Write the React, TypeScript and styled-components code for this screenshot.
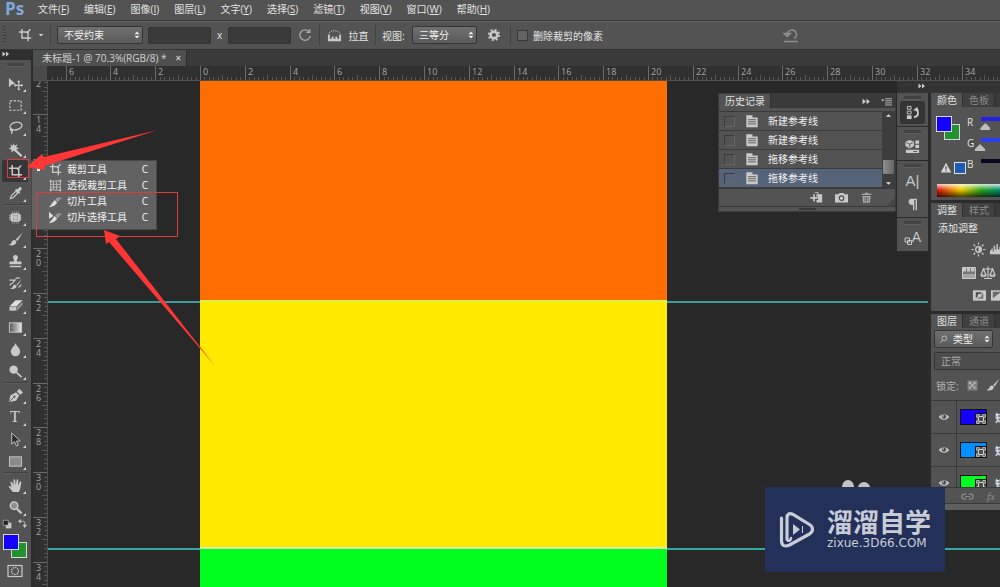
import React, { useEffect, useState } from 'react';
import styled, { createGlobalStyle } from 'styled-components';

const GlobalStyle = createGlobalStyle`
  * { box-sizing: border-box; }
  html, body { margin: 0; padding: 0; background: #282828; }
  body, button, input, select {
    font-family: "Open Sans", "Noto Sans CJK SC", sans-serif;
    font-size: 10px;
    color: #e4e4e4;
  }
  button { border: 0; padding: 0; background: none; cursor: pointer; }
  ul { list-style: none; margin: 0; padding: 0; }
  svg { display: block; flex: none; }
`;

/* ---------- icons ---------- */

const C = '#c9c9c9';

const ICONS: Record<string, React.ReactNode> = {
  move: (
    <>
      <path d="M1 2v10l3-3 4-.5z" fill={C} />
      <path d="M11.500 5.500v9M7 10h9" stroke={C} strokeWidth="1.200" fill="none" />
      <path d="M11.500 4.500l1.800 2h-3.600zM11.500 15.500l1.800-2h-3.600zM6.300 10l2-1.800v3.600zM16 10l-2-1.800v3.600z" fill={C} />
    </>
  ),
  marquee: <rect x="2" y="3" width="12" height="10" fill="none" stroke={C} strokeWidth="1.200" strokeDasharray="2.500 1.500" />,
  lasso: (
    <g fill="none" stroke={C} strokeWidth="1.400">
      <ellipse cx="8.500" cy="6.500" rx="6.500" ry="4" transform="rotate(-12 8.500 6.500)" />
      <path d="M4 9c-2 0-2 2.500 0 2.200 1 0 1 2-.8 3.300" />
    </g>
  ),
  wand: (
    <>
      <path d="M7 8l7.500 7" stroke={C} strokeWidth="2.400" />
      <path d="M6 1l1 3 3-1.500L8.800 5.500 12 7 8.500 8l.5 3-3-2-2.500 2.500.3-3.500L.5 7l3-1.300L2.500 2.500 5 4z" fill={C} />
    </>
  ),
  crop: <path d="M4.500 1v10.500H15M1 4.500h10.500V15M10 6l4-4.500" fill="none" stroke={C} strokeWidth="1.600" />,
  perspective: (
    <>
      <path d="M2 3l12-1v12L2 13zM5.500 2.700v10.600M9.500 2.400v11.300M2 6.500h12M2 10h12" fill="none" stroke={C} strokeWidth="1" />
      <path d="M1 1h2v3H1zM13 1h2v3h-2zM1 12h2v3H1zM13 12h2v3h-2z" fill={C} />
    </>
  ),
  slice: (
    <>
      <path d="M0 15l7-9 3 3.500c-2 3.500-6 5-10 5.500z" fill="#dedede" />
      <path d="M7.500 6L10 3h6.500l-6 6z" fill="#959595" />
    </>
  ),
  sliceSelect: (
    <>
      <path d="M0 1v8.500l5.500-3.500zM0 15l7-9 3 3.500c-2 3.500-6 5-10 5.500z" fill="#dedede" />
      <path d="M7.500 6L10 3h6.500l-6 6z" fill="#959595" />
    </>
  ),
  eyedropper: (
    <>
      <path d="M2.500 13.500l1-3 5-5 2 2-5 5z" fill="none" stroke={C} strokeWidth="1.300" />
      <path d="M7.500 4l1.500-1 1 .8L12 1.500c1.500-1.200 3.500.8 2.300 2.300L12.200 6l.8 1-1 1.500z" fill={C} />
    </>
  ),
  heal: (
    <>
      <rect x="2.500" y="3.500" width="11" height="9" rx="3" fill={C} />
      <path d="M5 1.500v13M7 1.500v13M9 1.500v13M11 1.500v13M1 6h14M1 8h14M1 10h14" stroke={C} strokeWidth=".8" strokeDasharray="1.200 .8" />
      <path d="M5 6h6M5 10h6M6 4v8M10 4v8" stroke="#8b8b8b" strokeWidth=".5" />
    </>
  ),
  brush: <path d="M15.500 .5L8.300 8l1.700 1.800zM7.800 8.700c-2-.8-3.500.8-4 2.300-.5 1.500-1.500 2.300-3.300 2.600 3.300 1.400 8 .8 8.500-3.300z" fill={C} />,
  stamp: <path d="M8 1a2.600 2.600 0 0 0-2.200 4c.6 1 .8 1.500.8 3H3c-1 0-1.500.7-1.500 1.500V11h13V9.500c0-.8-.5-1.500-1.500-1.500H9.400c0-1.500.2-2 .8-3A2.600 2.600 0 0 0 8 1zM2 12.500h12V14H2z" fill={C} />,
  historyBrush: (
    <>
      <path d="M15 3L9 9l1 1.200zM8.300 9.500c-1.800-.6-2.800.6-3.300 2-.4 1-1.300 1.600-2.600 1.800 2.600 1.200 6.500.6 6.900-2.800z" fill={C} />
      <path d="M1.500 4.500h6L4.500 8c-2 0-2 1-2 2M8 3c2-1.300 3.500-1 4.500-.5M11 12c1.500-.5 2.500-1.500 3-3" fill="none" stroke={C} strokeWidth="1.300" />
    </>
  ),
  eraser: (
    <>
      <path d="M8 2.500h7.500L9 9H1.500z" fill="#dedede" />
      <path d="M1.500 9.700H9V13.500H1.500z" fill={C} />
      <path d="M9.700 9.300L15.500 4v3.500L9.700 13.500z" fill="#8f8f8f" />
    </>
  ),
  gradient: (
    <>
      <defs>
        <linearGradient id="toolGradient">
          <stop offset="0" stopColor="#555" />
          <stop offset="1" stopColor="#e8e8e8" />
        </linearGradient>
      </defs>
      <rect x="1.500" y="3" width="13" height="10" fill="url(#toolGradient)" stroke={C} />
    </>
  ),
  drop: <path d="M8 1c.6 3 5 5.500 5 9.200a5 5 0 0 1-10 0C3 6.500 7.400 4 8 1z" fill={C} />,
  dodge: (
    <>
      <circle cx="6" cy="6" r="4.500" fill={C} />
      <path d="M9 9l5.500 5" stroke={C} strokeWidth="1.800" />
    </>
  ),
  pen: (
    <>
      <path d="M1 15L2.500 8 8.500 4.500l3.500 3.500L8.500 13.500z" fill={C} />
      <path d="M9.500 3.700l2.500-3 4 4-3 2.500z" fill={C} />
      <path d="M1.500 14.500l4.500-4.500" stroke="#535353" />
      <circle cx="6.800" cy="9.200" r="1.200" fill="#535353" />
    </>
  ),
  pathSelect: <path d="M4 1v12l3-2.800L9 15l2-1-2-4.300 4-.2z" fill="#2c2c2c" stroke={C} strokeWidth="1" />,
  rect: <rect x="1.500" y="3" width="13" height="10" fill="#8b8b8b" stroke={C} />,
  hand: <path d="M5 15c-1-2-3-4-4.300-6 .8-1 2-.5 3.300 1L2.500 4.500c.8-1 1.800-.5 2 .3L6 8 5.700 2c.6-1 1.700-.9 1.900 0L8.300 7.500 9.300 2c.6-.9 1.700-.6 1.700.3L10.700 8l2-4c.8-.8 1.800-.2 1.500.8C13.500 8 13.500 12 11.500 15z" fill={C} />,
  zoom: (
    <>
      <circle cx="6.500" cy="6" r="4" fill="#8d8d8d" stroke={C} strokeWidth="1.600" />
      <path d="M9.500 9.300l5 5" stroke={C} strokeWidth="2.400" />
    </>
  ),
  mask: (
    <>
      <rect x="1" y="2.500" width="14" height="11" fill="none" stroke={C} strokeWidth="1.200" />
      <circle cx="8" cy="8" r="3.500" fill="none" stroke={C} strokeWidth="1.200" strokeDasharray="1.500 .8" />
    </>
  ),
  rotate: <path d="M12.500 4A6 6 0 1 0 14 9M13.500 1v4H9.500" fill="none" stroke="#a9a9a9" strokeWidth="1.500" />,
  straighten: (
    <>
      <path d="M1 7h2v7H1zM13 7h2v7h-2zM2 11.500h12V14H2zM5 9h2v3H5zM9 9h2v3H9z" fill={C} />
      <path d="M2 5.500c3-3.500 9-3.500 12 0" fill="none" stroke={C} strokeDasharray="1.500 1" />
    </>
  ),
  gear: (
    <>
      <circle cx="8" cy="8" r="3.800" fill="none" stroke={C} strokeWidth="2.800" />
      <circle cx="8" cy="8" r="6" fill="none" stroke={C} strokeWidth="2" strokeDasharray="2.350 2.350" />
    </>
  ),
  reset: <path d="M4.500 8a4.500 4.500 0 1 1 6.500 3.500M1 6.500l3.300 3 3-3zM1 14.500h14" fill="none" stroke="#8f8f8f" strokeWidth="1.500" />,
  doc: (
    <>
      <path d="M1.500 1.500h7V4h6v11h-13z" fill={C} />
      <path d="M3.500 6.500h9M3.500 8.900h9M3.500 11.300h9" stroke="#555" strokeWidth="1" />
    </>
  ),
  newDoc: (
    <>
      <path d="M8 4h7v10H8V11h2V7H8z" fill={C} />
      <path d="M5 4v9M.5 8.500h9" stroke={C} strokeWidth="2" />
      <path d="M6 2h4v3M12 6v2h-1" fill="none" stroke={C} />
    </>
  ),
  camera: (
    <>
      <path d="M0 4h4.500l1-1.500h5l1 1.500H16v10H0z" fill={C} />
      <circle cx="8" cy="8.800" r="2.800" fill={C} stroke="#505050" strokeWidth="1.400" />
    </>
  ),
  trash: (
    <>
      <path d="M2 3.500h12V5H2zM6 2h4v1.500H6zM3 6h10l-.7 8.500H3.700z" fill="#a8a8a8" />
      <path d="M6 7.500v5.500M8 7.500v5.500M10 7.500v5.500" stroke="#5b5b5b" />
    </>
  ),
  history: (
    <>
      <path d="M2.500 1.500h4v3h-4zM2.500 6.500h4v3h-4z" fill="none" stroke={C} />
      <path d="M2 11h5v4H2z" fill={C} />
      <path d="M9.500 13c5-1 5-4 3.500-7" fill="none" stroke={C} strokeWidth="2" />
      <path d="M8.500 5.500L13 2l2 5z" fill={C} />
    </>
  ),
  props: (
    <>
      <path d="M5 1l4.500 2v4.500L5 10 .5 7.500V3z" fill={C} />
      <path d="M1.500 3.800L5 5.500l3.500-1.700M5 5.500v3.500" stroke="#555" fill="none" />
      <path d="M11 1.500h4V5h-4zM11 6h4v3.500h-4zM1 11.500h14V15H1z" fill={C} />
      <path d="M9 13.300h4" stroke="#555" />
    </>
  ),
  paragraph: <path d="M12.500 2H6.500a3.500 3.500 0 0 0 0 7H8v6h1.500V3.500h1.500V15h1.500z" fill={C} />,
  charStyle: (
    <>
      <path d="M2 2h9v8H2z" fill="none" stroke={C} strokeWidth="2" />
      <path d="M7 7h8v8H7z" fill="none" stroke={C} strokeWidth="2" />
    </>
  ),
  sun: (
    <>
      <circle cx="8" cy="8" r="3" fill="none" stroke={C} strokeWidth="1.400" />
      <path d="M8 5a3 3 0 0 1 0 6z" fill={C} />
      <path d="M8 .5v2.500M8 13v2.500M.5 8H3M13 8h2.500M2.700 2.700l1.800 1.800M11.500 11.500l1.800 1.800M2.700 13.300l1.800-1.800M11.500 4.500l1.800-1.800" stroke={C} strokeWidth="1.300" />
    </>
  ),
  levels: <path d="M1 13V9h1.500V7H4v3h1V4h1.500v4H8V2h1.500v6H11V5h1.500v4H14v4z" fill={C} />,
  hue: (
    <>
      <path d="M1.500 2.500h13v11h-13z" fill="#777" stroke={C} />
      <path d="M2 3h3v3.500H2zM6 3h3v3.500H6zM10 3h3.500v3.500H10z" fill={C} />
      <path d="M2 9h12v4H2z" fill="#a5a5a5" />
    </>
  ),
  balance: <path d="M8 1.500v12M4 13.500h8M2.500 4h11M3.500 4L1 10h5zM12.500 4L10 10h5zM1 10c.5 2 4.500 2 5 0zM10 10c.5 2 4.500 2 5 0z" fill="none" stroke={C} strokeWidth="1.200" />,
  invert: (
    <>
      <rect x="1" y="2.500" width="14" height="11" fill={C} />
      <path d="M4 4.500h7L4 11z" fill="#4b4b4b" />
      <path d="M12 5v6.500H5.500z" fill="#777" />
      <circle cx="8" cy="8" r="2" fill={C} />
    </>
  ),
  poster: (
    <>
      <rect x="1" y="2.500" width="14" height="11" fill={C} />
      <path d="M3 4h9L3 11z" fill="#6b6b6b" />
    </>
  ),
  checker: (
    <>
      <rect x="1.500" y="1.500" width="13" height="13" fill="#777" stroke="#999" />
      <path d="M3 3h3v3H3zM9.500 3h3v3h-3zM6 6h3.500v3.500H6zM3 9.500h3v3H3zM9.500 9.500h3v3h-3z" fill="#bbb" />
    </>
  ),
  eye: (
    <>
      <path d="M1 8c3.500-5 10.500-5 14 0-3.500 5-10.500 5-14 0z" fill="#c0c0c0" />
      <circle cx="8" cy="7.500" r="2.800" fill="#4d4d4d" />
      <circle cx="7.200" cy="6.800" r="1" fill="#ccc" />
    </>
  ),
  link: <path d="M6.500 11H4a3 3 0 0 1 0-6h2.500M9.500 5H12a3 3 0 0 1 0 6H9.500M5 8h6" fill="none" stroke="#909090" strokeWidth="1.400" />,
  search: (
    <>
      <circle cx="9.500" cy="6" r="4.200" fill="none" stroke={C} strokeWidth="1.500" />
      <path d="M6.500 9l-4.500 5" stroke={C} strokeWidth="1.500" />
    </>
  ),
  warn: (
    <>
      <path d="M8 1l7 13H1z" fill="#d6d6d6" />
      <path d="M8 5.500v4.500M8 11.200v1.500" stroke="#444" strokeWidth="1.500" />
    </>
  ),
  updown: <path d="M3 6.500L8 1l5 5.500zM3 9.500L8 15l5-5.500z" fill="#e8e8e8" />,
  double: <path d="M1 3l6 5-6 5zM8 3l6 5-6 5z" fill="#cfcfcf" />,
  menu: (
    <>
      <path d="M0 5h5L2.500 8z" fill={C} />
      <path d="M6 4h10M6 7h10M6 10h10M6 13h10" stroke={C} strokeWidth="1.200" />
    </>
  ),
  caret: <path d="M2 5h12l-6 6z" fill="#e0e0e0" />,
  up: <path d="M2 11h12L8 5z" fill="#e0e0e0" />,
  defaults: (
    <>
      <path d="M6 6h9v9H6z" fill={C} />
      <path d="M2 2h8v8H2z" fill="#222" stroke={C} />
    </>
  ),
  swap: (
    <>
      <path d="M4 4h4c3 0 4 1 4 4v3" fill="none" stroke={C} strokeWidth="1.600" />
      <path d="M5 0v8L0 4zM8 10h8l-4 6z" fill={C} />
    </>
  ),
  vector: (
    <>
      <path d="M4 4h8v8H4z" fill="none" stroke="#ddd" strokeWidth="1.500" />
      <path d="M1 1h4v4H1zM11 1h4v4h-4zM1 11h4v4H1zM11 11h4v4h-4z" fill="#4a4a4a" stroke="#ddd" strokeWidth="1.300" />
    </>
  ),
};

const Icon = ({ name, size = 16 }: { name: string; size?: number }) => (
  <svg width={size} height={size} viewBox="0 0 16 16" aria-hidden="true">
    {ICONS[name]}
  </svg>
);

/* ---------- frame ---------- */

const Page = styled.div`
  display: flex;
  flex-direction: column;
  min-height: 100vh;
  overflow: hidden;
  position: relative;
`;

const MenuBar = styled.nav`
  display: flex;
  align-items: flex-start;
  gap: 15px;
  height: 20px;
  padding-left: 5px;
  background: #535353;
`;

const Brand = styled.span`
  width: 18px;
  font: bold 17px/17px "Open Sans", sans-serif;
  color: #7fa9da;
`;

const MenuItem = styled.button`
  height: 17px;
  text-align: left;
  white-space: nowrap;
  line-height: 16px;
`;

const OptionsBar = styled.div`
  display: flex;
  align-items: center;
  height: 30px;
  padding-left: 3px;
  background: #535353;
  border-top: 1px solid #333;
  border-bottom: 1px solid #333;
  box-shadow: inset 0 1px #626262;
  white-space: nowrap;
`;

const Grip = styled.span`
  width: 3px;
  height: 18px;
  margin-right: 12px;
  background: repeating-linear-gradient(#3e3e3e 0 1px, #535353 1px 3px);
`;

const Divider = styled.span`
  width: 1px;
  height: 20px;
  margin-right: 6px;
  background: #424242;
`;

const ToolIcon = styled.button<{ $w: number }>`
  display: flex;
  align-items: center;
  justify-content: center;
  flex: none;
  width: ${(p) => p.$w}px;
  height: 18px;
`;

const SelectBox = styled.span<{ $w: string; $flat?: boolean; $pad?: number }>`
  display: flex;
  align-items: center;
  position: relative;
  flex: none;
  width: ${(p) => p.$w};
  height: 18px;
  border: 1px solid #353535;
  border-radius: 2px;
  background: ${(p) => (p.$flat ? '#4d4d4d' : 'linear-gradient(#707070, #5a5a5a)')};

  select {
    appearance: none;
    flex: 1;
    width: 100%;
    height: 16px;
    padding: 0 0 0 ${(p) => p.$pad ?? 6}px;
    border: 0;
    background: none;
    line-height: 14px;
    color: ${(p) => (p.$flat ? '#a8a8a8' : '#f0f0f0')};
  }
  svg { position: absolute; right: 1px; pointer-events: none; }
  svg:first-child { right: auto; left: 4px; }
`;

const SizeFields = styled.span`
  display: flex;
  align-items: center;
  padding-left: 5px;
`;

const SizeInput = styled.input`
  width: 63px;
  height: 17px;
  border: 1px solid #333;
  border-radius: 2px;
  background: #3a3a3a;
`;

const Times = styled.span`
  width: 17px;
  text-align: center;
`;

const FieldLabel = styled.label`
  width: 30px;
`;

const CheckLabel = styled.label`
  display: flex;
  align-items: center;
  gap: 5px;
`;

const Check = styled.input`
  appearance: none;
  flex: none;
  width: 11px;
  height: 11px;
  margin: 0;
  border: 1px solid #383838;
  background: #626262;
`;

const ResetButton = styled(ToolIcon)`
  margin-left: 180px;
`;

const Body = styled.div`
  display: flex;
  flex: 1;
`;

/* ---------- tool column ---------- */

const ToolColumn = styled.aside`
  display: flex;
  flex-direction: column;
  flex: none;
  width: 33px;
  background: #535353;
  border-right: 2px solid #2b2b2b;
`;

const ColumnHead = styled.div`
  height: 10px;
  padding-left: 2px;
  background: #2f2f2f;
`;

const PanelGrip = styled.div<{ $h: number }>`
  display: flex;
  justify-content: center;
  height: ${(p) => p.$h}px;
  padding-top: 3px;
  &::after {
    content: '';
    width: 17px;
    height: 3px;
    background: #424242;
    border-bottom: 1px solid #5f5f5f;
  }
`;

const Tool = styled.button<{ $active?: boolean }>`
  display: flex;
  align-items: center;
  justify-content: center;
  position: relative;
  flex: none;
  width: 26px;
  height: 22px;
  margin-left: 2px;
  background: ${(p) => (p.$active ? '#363636' : 'none')};
  border-radius: 2px;
  &::after {
    content: '';
    position: absolute;
    right: 2px;
    bottom: 2px;
    border-left: 3px solid transparent;
    border-bottom: 3px solid #d6d6d6;
  }
  span { font: 16px/16px "Liberation Serif", serif; color: #d3d3d3; }
`;

const ToolRule = styled.div`
  height: 2px;
  margin: 0 3px;
  background: #414141;
  border-bottom: 1px solid #5b5b5b;
`;

const SwatchTools = styled.div`
  display: flex;
  justify-content: space-between;
  padding: 1px 4px 0 2px;
  height: 14px;
`;

const Swatches = styled.div<{ $left: number }>`
  display: grid;
  grid-template-columns: 8px 8px 8px;
  grid-template-rows: 8px 8px 8px;
  margin: 2px 0 4px ${(p) => p.$left}px;
`;

const Swatch = styled.button<{ $color: string; $back?: boolean }>`
  grid-area: ${(p) => (p.$back ? '2 / 2 / 4 / 4' : '1 / 1 / 3 / 3')};
  z-index: ${(p) => (p.$back ? 0 : 1)};
  border: 1px solid #d8d8d8;
  background: ${(p) => p.$color};
`;

/* ---------- document ---------- */

const Workspace = styled.main`
  display: flex;
  flex-direction: column;
  flex: 1;
  min-width: 0;
`;

const TabStrip = styled.div`
  display: flex;
  height: 16px;
  background: #3a3a3a;
`;

const DocTab = styled.div`
  display: flex;
  align-items: center;
  gap: 9px;
  padding: 0 5px 0 9px;
  background: #4f4f4f;
  border-right: 1px solid #2f2f2f;
  line-height: 15px;
  white-space: nowrap;
  color: #d2d2d2;
  button { line-height: 12px; }
`;

const RulerRow = styled.div`
  display: flex;
  height: 15px;
  overflow: hidden;
  background: #303030;
  border-bottom: 1px solid #505050;
`;

const Corner = styled.span`
  flex: none;
  width: 15px;
  background: #4a4a4a;
  border-right: 1px solid #303030;
`;

const CanvasRow = styled.div`
  display: flex;
  flex: 1;
`;

const SideRuler = styled.div`
  contain: size;
  flex: none;
  width: 15px;
  overflow: hidden;
  background: #303030;
  border-right: 1px solid #505050;
`;

const Canvas = styled.div`
  display: flex;
  position: relative;
  flex: 1;
  min-width: 0;
  padding-left: 152px;
  background: #282828;
`;

const Artboard = styled.div`
  display: flex;
  flex-direction: column;
  position: relative;
  width: 467px;
`;

const Band = styled.div<{ $color: string; $edge?: string; $h?: number }>`
  height: ${(p) => (p.$h ? `${p.$h}px` : 'auto')};
  flex: ${(p) => (p.$h ? 'none' : 1)};
  background: ${(p) => p.$color};
  border-bottom: ${(p) => (p.$edge ? `2px solid ${p.$edge}` : '0')};
`;

const Guide = styled.div<{ $y: number; $color: string }>`
  position: absolute;
  left: 0;
  right: 0;
  top: ${(p) => p.$y}px;
  height: 2px;
  background: ${(p) => p.$color};
`;

const PITCH = 22.4;

const useWindowSize = () => {
  const read = () => ({ width: window.innerWidth, height: window.innerHeight });
  const [size, setSize] = useState(read);
  useEffect(() => {
    const update = () => setSize(read());
    window.addEventListener('resize', update);
    return () => window.removeEventListener('resize', update);
  }, []);
  return size;
};

const range = (from: number, to: number) => Array.from({ length: to - from }, (_, i) => from + i);
const isMajor = (i: number) => i % 10 === 0;
const tickLength = (i: number) => (isMajor(i) ? 14 : i % 5 === 0 ? 5 : 3);
const tickColor = (i: number) => (isMajor(i) ? '#6a6a6a' : '#585858');

const TopRuler = ({ width }: { width: number }) => {
  const at = (i: number) => Math.round(152 + (i * PITCH) / 5);
  const marks = range(-33, 600).filter((i) => at(i) < width);
  return (
    <svg width={width} height="14" aria-label="水平标尺">
      {marks.map((i) => (
        <path key={i} d={`M${at(i) + 0.5} ${14 - tickLength(i)}V14`} stroke={tickColor(i)} />
      ))}
      {marks.filter((i) => isMajor(i) && at(i) < width - 16).map((i) => (
        <text key={i} x={at(i) + 3} y="9" fontSize="9" fill="#a6a6a6">{Math.abs(i / 5)}</text>
      ))}
    </svg>
  );
};

const LeftRuler = ({ height }: { height: number }) => {
  const at = (i: number) => Math.round(212 + ((i - 110) * PITCH) / 5);
  const marks = range(60, 500).filter((i) => at(i) < height);
  return (
    <svg width="14" height={height} aria-label="垂直标尺">
      {marks.map((i) => (
        <path key={i} d={`M${14 - tickLength(i)} ${at(i) + 0.5}H14`} stroke={tickColor(i)} />
      ))}
      {marks.filter(isMajor).map((i) =>
        String(i / 5).split('').map((digit, k) => {
          const y = at(i) + 9 + k * 9;
          return y > 0 && y < height && (
            <text key={`${i}-${k}`} x="3" y={y} fontSize="9" fill="#a6a6a6">{digit}</text>
          );
        }),
      )}
    </svg>
  );
};

/* ---------- history panel ---------- */

const HistoryPanel = styled.section`
  position: absolute;
  top: 12px;
  right: 104px;
  z-index: 2;
  width: 178px;
  background: #535353;
  border: 1px solid #3a3a3a;
`;

const PanelTabs = styled.div`
  display: flex;
  align-items: stretch;
  flex: none;
  height: 14px;
  background: #3a3a3a;
`;

const PanelTab = styled.button<{ $on?: boolean }>`
  padding: 0 5px 0 6px;
  background: ${(p) => (p.$on ? '#535353' : '#404040')};
  color: ${(p) => (p.$on ? '#e0e0e0' : '#8b8b8b')};
  border-right: 1px solid #303030;
  line-height: 13px;
  white-space: nowrap;
`;

const TabActions = styled.span`
  display: flex;
  align-items: center;
  gap: 10px;
  margin-left: auto;
  padding-right: 3px;
`;

const HistoryBody = styled.div`
  display: flex;
  padding-top: 3px;
  border-bottom: 1px solid #3a3a3a;
`;

const HistoryList = styled.ul`
  flex: 1;
  border-top: 1px solid #3a3a3a;
`;

const HistoryItem = styled.li<{ $on?: boolean }>`
  height: 19px;
  background: ${(p) => (p.$on ? '#566479' : '#535353')};
  border-bottom: 1px solid #3c3c3c;
  label {
    display: flex;
    align-items: center;
    height: 18px;
    padding-left: 5px;
    line-height: 16px;
    color: #f0f0f0;
  }
  svg { margin: 0 9px 0 10px; }
  input { background: none; border-color: #3b3b3b #666 #666 #3b3b3b; }
`;

const ScrollTrack = styled.div`
  display: flex;
  flex-direction: column;
  align-items: center;
  width: 13px;
  padding: 1px 0;
  background: #3d3d3d;
`;

const ScrollThumb = styled.div`
  width: 11px;
  height: 14px;
  margin: auto 0 6px;
  border-radius: 1px;
  background: linear-gradient(90deg, #8e8e8e, #666);
`;

const HistoryFoot = styled.div`
  display: flex;
  justify-content: flex-end;
  gap: 12px;
  height: 17px;
  padding: 2px 22px 0 0;
  background:
    linear-gradient(135deg, transparent 50%, #464646 50%) right bottom / 8px 8px no-repeat;
`;

const HistoryEdge = styled.div`
  display: flex;
  justify-content: center;
  align-items: center;
  height: 5px;
  border-top: 1px solid #3a3a3a;
  &::after { content: ''; width: 17px; height: 2px; background: #3a3a3a; }
`;

/* ---------- right dock ---------- */

const Dock = styled.div`
  position: absolute;
  top: 0;
  right: 0;
  z-index: 2;
  width: 103px;
`;

const DockHead = styled.div`
  height: 12px;
  padding: 1px 0 0 21px;
  background: #333;
`;

const DockColumns = styled.div`
  display: flex;
  align-items: flex-start;
`;

const IconDock = styled.div`
  width: 31px;
  background: #2b2b2b;
`;

const IconGroup = styled.div`
  display: flex;
  flex-direction: column;
  align-items: center;
  margin-bottom: 1px;
  padding-bottom: 2px;
  background: #535353;
`;

const DockButton = styled.button<{ $on?: boolean }>`
  display: flex;
  align-items: center;
  justify-content: center;
  width: 25px;
  height: 23px;
  border-radius: 3px;
  background: ${(p) => (p.$on ? '#353535' : 'none')};
  color: ${C};
  font: 15px/15px "Liberation Sans", sans-serif;
`;

const StyleGlyph = styled.span`
  display: flex;
  align-items: flex-end;
  font-size: 14px;
`;

const PanelStack = styled.div`
  flex: 1;
  min-width: 0;
  background: #2b2b2b;
  border-left: 3px solid #2b2b2b;
  overflow: hidden;
`;

const Panel = styled.section<{ $h: number }>`
  display: flex;
  flex-direction: column;
  height: ${(p) => p.$h}px;
  margin-bottom: 3px;
  background: #535353;
  overflow: hidden;
  &:last-child { margin-bottom: 0; }
`;

const ColorBody = styled.div`
  display: flex;
  height: 77px;
  padding: 7px 0 0 5px;
`;

const ColorLeft = styled.div`
  display: flex;
  flex-direction: column;
  justify-content: space-between;
  flex: none;
  width: 31px;
  height: 60px;
`;

const Gamut = styled.div`
  display: flex;
  align-items: center;
  gap: 2px;
  padding-left: 4px;
  &::after {
    content: '';
    width: 10px;
    height: 10px;
    border: 1px solid #ddd;
    background: #1d5bb5;
  }
`;

const Channel = styled.label`
  display: flex;
  height: 21px;
  line-height: 16px;
  span { flex: none; width: 8px; }
`;

const Slider = styled.input<{ $fill: string }>`
  appearance: none;
  flex: none;
  width: 100px;
  height: 13px;
  margin: 3px 0 0 0;
  background: linear-gradient(${(p) => p.$fill}, ${(p) => p.$fill}) 6px 0 / 100px 4px no-repeat;
  &::-webkit-slider-thumb {
    appearance: none;
    width: 10px;
    height: 7px;
    margin-top: 6px;
    background: #bdbdbd;
    clip-path: polygon(50% 0, 100% 70%, 100% 100%, 0 100%, 0 70%);
  }
`;

const Spectrum = styled.div`
  height: 13px;
  margin-left: 6px;
  background:
    linear-gradient(rgba(255, 255, 255, .8), rgba(255, 255, 255, 0) 45%, rgba(0, 0, 0, .7)),
    linear-gradient(90deg, #e01010, #f0d000 24px, #30a820 44px, #008c78 64px);
`;

const AdjustTitle = styled.div`
  padding: 3px 0 6px 7px;
  line-height: 16px;
`;

const AdjustRow = styled.div<{ $left: number }>`
  display: flex;
  gap: 3px;
  height: 23px;
  padding-left: ${(p) => p.$left}px;
`;

const LayersTop = styled.div`
  display: flex;
  flex-direction: column;
  gap: 4px;
  flex: none;
  height: 73px;
  padding: 2px 0 0 3px;
  border-bottom: 1px solid #3a3a3a;
`;

const LockRow = styled.div`
  display: flex;
  align-items: center;
  gap: 8px;
  height: 22px;
  padding-left: 2px;
  white-space: nowrap;
  color: #b4b4b4;
`;

const LayerList = styled.ul`
  flex: 1;
  min-height: 0;
  overflow: hidden;
`;

const LayerItem = styled.li`
  display: flex;
  align-items: center;
  height: 33px;
  border-bottom: 1px solid #3c3c3c;
  font-weight: bold;
  white-space: nowrap;
`;

const EyeButton = styled.button`
  display: flex;
  align-items: center;
  justify-content: center;
  flex: none;
  width: 26px;
  height: 32px;
  border-right: 1px solid #3c3c3c;
`;

const Thumb = styled.span<{ $color: string }>`
  display: flex;
  justify-content: flex-end;
  align-items: flex-end;
  flex: none;
  width: 27px;
  height: 16px;
  margin: 0 8px 0 3px;
  border: 1px solid #111;
  background: ${(p) => p.$color};
  svg { background: #4a4a4a; border-left: 1px solid #111; border-top: 1px solid #111; }
`;

const LayerFoot = styled.div`
  display: flex;
  align-items: center;
  gap: 13px;
  flex: none;
  height: 23px;
  padding: 0 0 6px 30px;
  border-top: 1px solid #3a3a3a;
  background: linear-gradient(#535353 15px, #3a3a3a 15px 16px, #606060 16px);
  i { font: italic 11px/12px "Liberation Serif", serif; color: #909090; }
`;

/* ---------- flyout, annotations, watermark ---------- */

const Flyout = styled.ul`
  position: absolute;
  left: 31px;
  top: 160px;
  width: 126px;
  padding-bottom: 4px;
  background: #626262;
  border: 1px solid #484848;
`;

const FlyoutItem = styled.li<{ $current?: boolean }>`
  button {
    display: flex;
    align-items: center;
    width: 100%;
    height: 16px;
    padding: 0 8px 0 5px;
    line-height: 14px;
    color: #f2f2f2;
  }
  button::before {
    content: '';
    width: 3px;
    height: 3px;
    margin-right: 9px;
    background: ${(p) => (p.$current ? '#f2f2f2' : 'transparent')};
  }
  span { flex: 1; margin-left: 5px; text-align: left; }
`;

const Notes = styled.svg`
  position: absolute;
  left: 0;
  top: 0;
  z-index: 4;
  pointer-events: none;
`;

const Watermark = styled.a`
  display: flex;
  align-items: center;
  gap: 11px;
  position: absolute;
  right: 55px;
  bottom: 15px;
  z-index: 3;
  width: 180px;
  height: 85px;
  padding-left: 14px;
  background: #22305a;
  color: #c8ccd6;
  text-decoration: none;
`;

const Ears = styled.svg`
  position: absolute;
  left: 76px;
  top: -7px;
`;

const WatermarkText = styled.span`
  display: flex;
  flex-direction: column;
  padding-bottom: 2px;
  strong { font: bold 26px/28px "Noto Sans CJK SC", sans-serif; }
  small { font: 12px/16px "DejaVu Sans", sans-serif; }
`;

/* ---------- data ---------- */

const MENUS = [
  ['文件', 'F'], ['编辑', 'E'], ['图像', 'I'], ['图层', 'L'], ['文字', 'Y'],
  ['选择', 'S'], ['滤镜', 'T'], ['视图', 'V'], ['窗口', 'W'], ['帮助', 'H'],
];

const TOOL_GROUPS = [
  ['move', 'marquee', 'lasso', 'wand', 'crop', 'eyedropper'],
  ['heal', 'brush', 'stamp', 'historyBrush', 'eraser', 'gradient', 'drop', 'dodge'],
  ['pen', 'type', 'pathSelect', 'rect'],
  ['hand', 'zoom'],
];

const FLYOUT = [
  ['crop', '裁剪工具'], ['perspective', '透视裁剪工具'], ['slice', '切片工具'], ['sliceSelect', '切片选择工具'],
];

const HISTORY = ['新建参考线', '新建参考线', '拖移参考线', '拖移参考线'];

const CHANNELS = [
  { name: 'R', fill: '#2222e8', value: 6 },
  { name: 'G', fill: '#2a3cf0', value: 0 },
  { name: 'B', fill: '#0a0620', value: 100 },
];

const LAYERS = ['#1400ff', '#0090ff', '#00ff1e'];

export default function App() {
  const { width, height } = useWindowSize();
  return (
    <Page>
      <GlobalStyle />
      <MenuBar>
        <Brand>Ps</Brand>
        {MENUS.map(([label, key]) => (
          <MenuItem key={key}>{label}(<u>{key}</u>)</MenuItem>
        ))}
      </MenuBar>

      <OptionsBar>
        <Grip />
        <ToolIcon $w={14} aria-label="裁剪"><Icon name="crop" size={14} /></ToolIcon>
        <ToolIcon $w={18} aria-label="预设"><Icon name="caret" size={6} /></ToolIcon>
        <Divider />
        <SelectBox $w="86px">
          <select aria-label="约束"><option>不受约束</option></select>
          <Icon name="updown" size={8} />
        </SelectBox>
        <SizeFields>
          <SizeInput aria-label="宽度" />
          <Times>x</Times>
          <SizeInput aria-label="高度" />
        </SizeFields>
        <ToolIcon $w={28} aria-label="旋转"><Icon name="rotate" size={14} /></ToolIcon>
        <Divider />
        <ToolIcon $w={16} aria-label="拉直图像"><Icon name="straighten" size={15} /></ToolIcon>
        <ToolIcon $w={33}>拉直</ToolIcon>
        <Divider />
        <FieldLabel htmlFor="overlay">视图:</FieldLabel>
        <SelectBox $w="65px">
          <select id="overlay"><option>三等分</option></select>
          <Icon name="updown" size={8} />
        </SelectBox>
        <ToolIcon $w={33} aria-label="设置"><Icon name="gear" size={14} /></ToolIcon>
        <Divider />
        <CheckLabel><Check type="checkbox" />删除裁剪的像素</CheckLabel>
        <ResetButton $w={16} aria-label="复位"><Icon name="reset" size={16} /></ResetButton>
      </OptionsBar>

      <Body>
        <ToolColumn>
          <ColumnHead><Icon name="double" size={8} /></ColumnHead>
          <PanelGrip $h={12} />
          {TOOL_GROUPS.map((group, g) => (
            <React.Fragment key={g}>
              {g > 0 && <ToolRule />}
              {group.map((t) => (
                <Tool key={t} $active={t === 'crop'} aria-label={t}>
                  {t === 'type' ? <span>T</span> : <Icon name={t} size={15} />}
                </Tool>
              ))}
            </React.Fragment>
          ))}
          <SwatchTools><Icon name="defaults" size={10} /><Icon name="swap" size={9} /></SwatchTools>
          <Swatches $left={3}>
            <Swatch $color="#1400ff" aria-label="前景色" />
            <Swatch $color="#22922e" $back aria-label="背景色" />
          </Swatches>
          <ToolIcon $w={30} aria-label="快速蒙版"><Icon name="mask" size={16} /></ToolIcon>
        </ToolColumn>

        <Workspace>
          <TabStrip>
            <DocTab>未标题-1 @ 70.3%(RGB/8) *<button aria-label="关闭">×</button></DocTab>
          </TabStrip>
          <RulerRow><Corner /><TopRuler width={Math.max(width - 48, 0)} /></RulerRow>
          <CanvasRow>
            <SideRuler><LeftRuler height={Math.max(height - 81, 0)} /></SideRuler>
            <Canvas>
              <Guide $y={220} $color="#3f9a9c" />
              <Guide $y={467} $color="#36a8a4" />
              <Artboard>
                <Band $color="#ff6e00" $edge="#dcf04c" $h={221} />
                <Band $color="#ffea00" $edge="#d8f8b0" $h={247} />
                <Band $color="#00ff1e" />
              </Artboard>

              <HistoryPanel>
                <PanelTabs>
                  <PanelTab $on>历史记录</PanelTab>
                  <TabActions><Icon name="double" size={9} /><Icon name="menu" size={11} /></TabActions>
                </PanelTabs>
                <HistoryBody>
                  <HistoryList>
                    {HISTORY.map((h, i) => (
                      <HistoryItem key={i} $on={i === 3}>
                        <label><Check type="checkbox" /><Icon name="doc" size={14} />{h}</label>
                      </HistoryItem>
                    ))}
                  </HistoryList>
                  <ScrollTrack>
                    <Icon name="up" size={7} />
                    <ScrollThumb />
                    <Icon name="caret" size={7} />
                  </ScrollTrack>
                </HistoryBody>
                <HistoryFoot>
                  <Icon name="newDoc" size={13} />
                  <Icon name="camera" size={13} />
                  <Icon name="trash" size={13} />
                </HistoryFoot>
                <HistoryEdge />
              </HistoryPanel>

              <Dock>
                <DockHead><Icon name="double" size={8} /></DockHead>
                <DockColumns>
                  <IconDock>
                    <IconGroup>
                      <PanelGrip $h={8} />
                      <DockButton $on aria-label="历史记录"><Icon name="history" size={15} /></DockButton>
                    </IconGroup>
                    <IconGroup>
                      <PanelGrip $h={8} />
                      <DockButton aria-label="属性"><Icon name="props" size={15} /></DockButton>
                    </IconGroup>
                    <IconGroup>
                      <PanelGrip $h={8} />
                      <DockButton aria-label="字符">A|</DockButton>
                      <DockButton aria-label="段落"><Icon name="paragraph" size={14} /></DockButton>
                    </IconGroup>
                    <IconGroup>
                      <PanelGrip $h={8} />
                      <DockButton aria-label="字符样式">
                        <StyleGlyph><Icon name="charStyle" size={8} />A</StyleGlyph>
                      </DockButton>
                    </IconGroup>
                  </IconDock>

                  <PanelStack>
                    <Panel $h={107}>
                      <PanelTabs>
                        <PanelTab $on>颜色</PanelTab>
                        <PanelTab>色板</PanelTab>
                      </PanelTabs>
                      <ColorBody>
                        <ColorLeft>
                          <Swatches $left={0}>
                            <Swatch $color="#1400ff" aria-label="前景色" />
                            <Swatch $color="#22922e" $back aria-label="背景色" />
                          </Swatches>
                          <Gamut><Icon name="warn" size={12} /></Gamut>
                        </ColorLeft>
                        <div>
                          {CHANNELS.map((c) => (
                            <Channel key={c.name}>
                              <span>{c.name}</span>
                              <Slider type="range" $fill={c.fill} defaultValue={c.value} />
                            </Channel>
                          ))}
                        </div>
                      </ColorBody>
                      <Spectrum />
                    </Panel>

                    <Panel $h={108}>
                      <PanelTabs>
                        <PanelTab $on>调整</PanelTab>
                        <PanelTab>样式</PanelTab>
                      </PanelTabs>
                      <AdjustTitle>添加调整</AdjustTitle>
                      <AdjustRow $left={40}><Icon name="sun" size={15} /><Icon name="levels" size={15} /></AdjustRow>
                      <AdjustRow $left={30}><Icon name="hue" size={16} /><Icon name="balance" size={16} /></AdjustRow>
                      <AdjustRow $left={41}><Icon name="invert" size={15} /><Icon name="poster" size={15} /></AdjustRow>
                    </Panel>

                    <Panel $h={196}>
                      <PanelTabs>
                        <PanelTab $on>图层</PanelTab>
                        <PanelTab>通道</PanelTab>
                      </PanelTabs>
                      <LayersTop>
                        <SelectBox $w="59px" $pad={18}>
                          <Icon name="search" size={9} />
                          <select aria-label="筛选"><option>类型</option></select>
                          <Icon name="updown" size={8} />
                        </SelectBox>
                        <SelectBox $w="120px" $flat>
                          <select aria-label="混合模式"><option>正常</option></select>
                        </SelectBox>
                        <LockRow>锁定:<Icon name="checker" size={11} /><Icon name="brush" size={14} /></LockRow>
                      </LayersTop>
                      <LayerList>
                        {LAYERS.map((color) => (
                          <LayerItem key={color}>
                            <EyeButton aria-label="可见性"><Icon name="eye" size={12} /></EyeButton>
                            <Thumb $color={color}><Icon name="vector" size={11} /></Thumb>
                            矩形
                          </LayerItem>
                        ))}
                      </LayerList>
                      <LayerFoot><Icon name="link" size={13} /><i>fx</i></LayerFoot>
                    </Panel>
                  </PanelStack>
                </DockColumns>
              </Dock>
            </Canvas>
          </CanvasRow>
        </Workspace>
      </Body>

      <Flyout>
        {FLYOUT.map(([icon, label], i) => (
          <FlyoutItem key={icon} $current={i === 0}>
            <button><Icon name={icon} size={13} /><span>{label}</span>C</button>
          </FlyoutItem>
        ))}
      </Flyout>

      <Notes width="230" height="380" aria-hidden="true">
        <g fill="none" stroke="#e03a3a">
          <rect x="7.500" y="159.500" width="21" height="18" />
          <rect x="36.500" y="192.500" width="141" height="44" />
        </g>
        <g fill="#ff3636">
          <path d="M158 130L44 157l-2-3-15 13 18 3-1-4z" />
          <path d="M215 366L109 242l-3 2-2-14 16 6-4 3z" />
        </g>
      </Notes>

      <Watermark href="#zixue">
        <Ears width="32" height="7" aria-hidden="true">
          <ellipse cx="7" cy="7" rx="6" ry="7" fill="#c4c4c4" />
          <ellipse cx="23" cy="8" rx="6" ry="6" fill="#c4c4c4" />
        </Ears>
        <svg width="37" height="37" viewBox="0 0 37 37" aria-hidden="true">
          <g fill="none" stroke="#c8ccd6" strokeWidth="3.200" strokeLinecap="round">
            <path d="M2.500 7v23c0 5 4 6 8 4l20-11c4-2.500 4-7 0-9.500L14 3.500C10.500 1.500 8 3 8 7v21" />
            <path d="M8 28c0 3 4 2 4-1" strokeWidth="2.500" />
          </g>
          <path d="M14 13l7 5.500-7 5.500z" fill="#c8ccd6" />
          <path d="M23.500 15v7" stroke="#c8ccd6" />
        </svg>
        <WatermarkText>
          <strong>溜溜自学</strong>
          <small>zixue.3D66.COM</small>
        </WatermarkText>
      </Watermark>
    </Page>
  );
}
